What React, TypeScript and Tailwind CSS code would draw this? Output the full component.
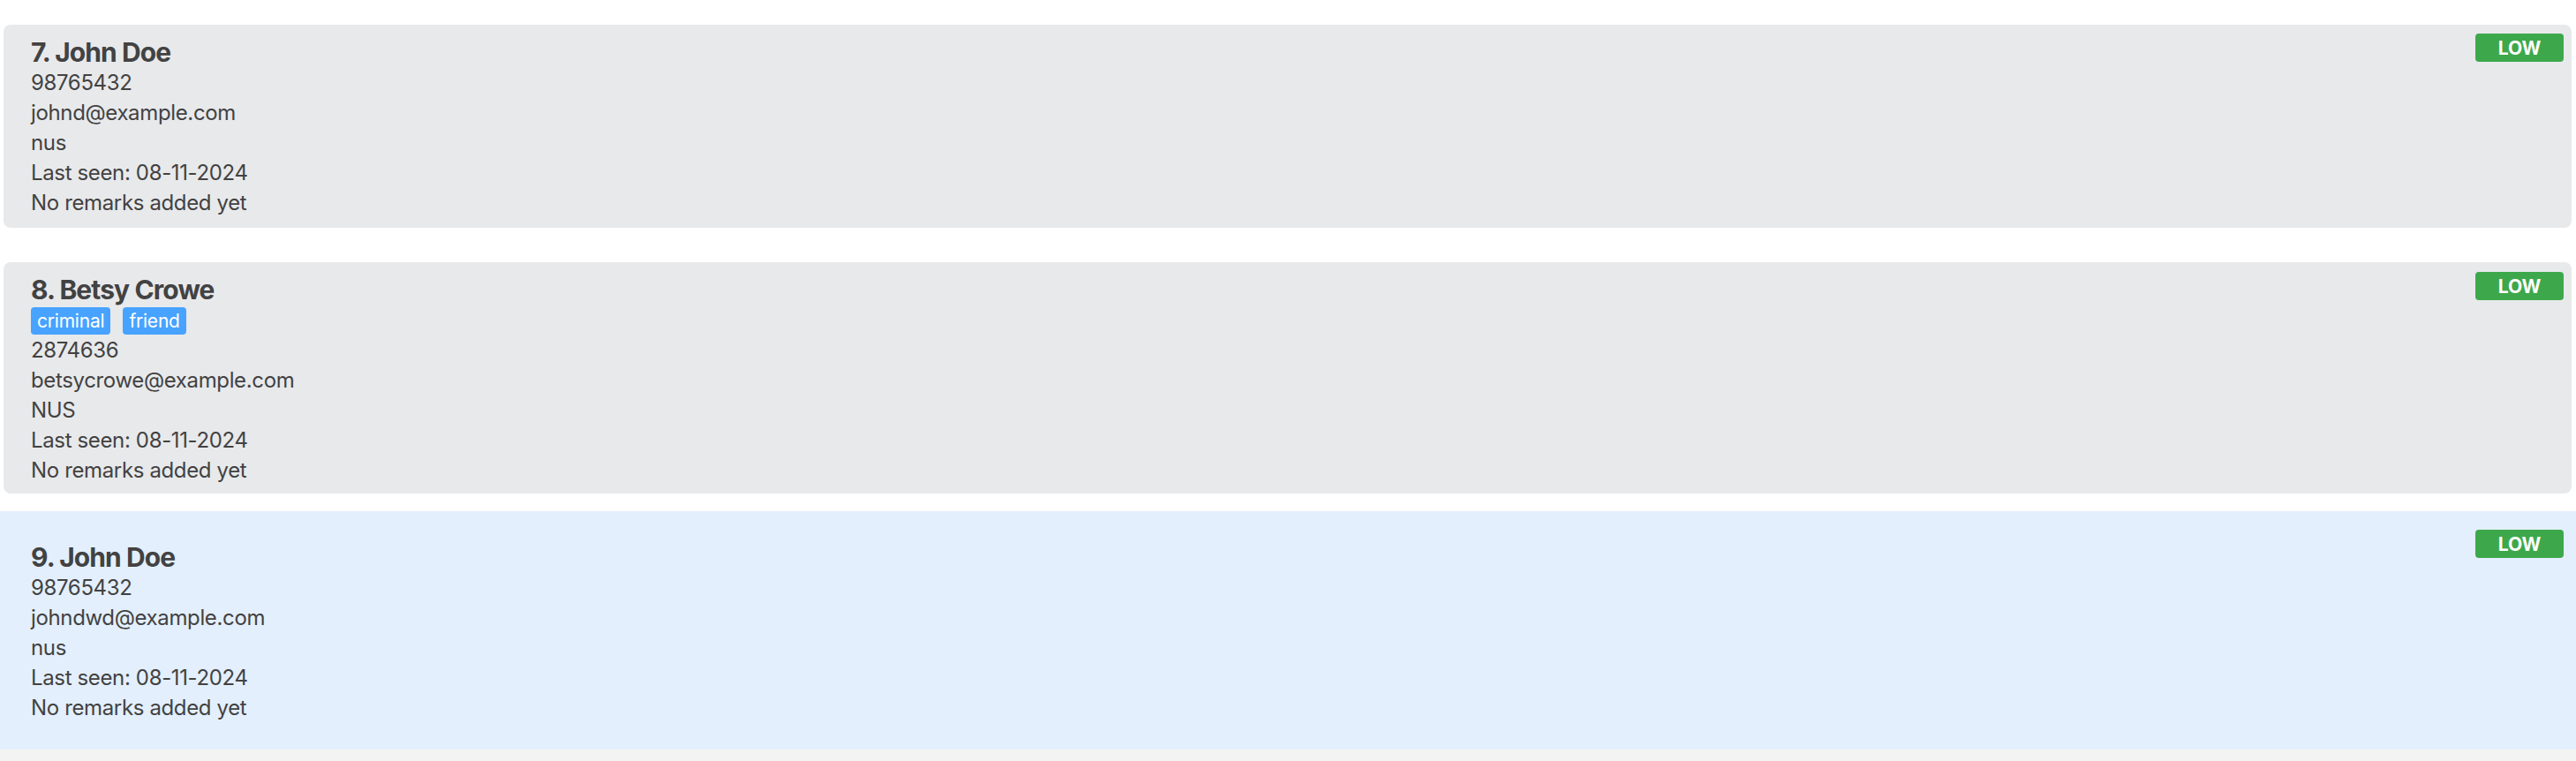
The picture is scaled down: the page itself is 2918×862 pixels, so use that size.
import React from 'react';

type Person = {
  index: number;
  name: string;
  tags: string[];
  phone: string;
  email: string;
  address: string;
  lastSeen: string;
  remark: string;
  priority: string;
};

const people: Person[] = [
  { index: 7, name: 'John Doe', tags: [], phone: '98765432', email: 'johnd@example.com', address: 'nus', lastSeen: '08-11-2024', remark: 'No remarks added yet', priority: 'LOW' },
  { index: 8, name: 'Betsy Crowe', tags: ['criminal', 'friend'], phone: '2874636', email: 'betsycrowe@example.com', address: 'NUS', lastSeen: '08-11-2024', remark: 'No remarks added yet', priority: 'LOW' },
  { index: 9, name: 'John Doe', tags: [], phone: '98765432', email: 'johndwd@example.com', address: 'nus', lastSeen: '08-11-2024', remark: 'No remarks added yet', priority: 'LOW' },
];

const PriorityBadge = ({ label, className }: { label: string; className: string }) => (
  <div className={`absolute flex h-[32px] w-[100px] items-center justify-center rounded-[4px] bg-[#3da84b] text-[21px] font-bold leading-none text-white ${className}`}>
    {label}
  </div>
);

const PersonBody = ({ p }: { p: Person }) => (
  <>
    <div className="text-[30px] font-bold leading-[35px] tracking-[-0.03em] text-[#424242]">
      {p.index}. {p.name}
    </div>
    {p.tags.length > 0 && (
      <div className="mt-[2px] mb-[1px] flex gap-[14px]">
        {p.tags.map((t) => (
          <span key={t} className="flex h-[31px] items-center rounded-[4px] bg-[#47a3ff] px-[7px] text-[21px] tracking-[-0.01em] text-white">
            {t}
          </span>
        ))}
      </div>
    )}
    <div className="text-[24px] leading-[34px] tracking-[-0.015em] text-[#424242]">
      <div>{p.phone}</div>
      <div>{p.email}</div>
      <div>{p.address}</div>
      <div>Last seen: {p.lastSeen}</div>
      <div>{p.remark}</div>
    </div>
  </>
);

export default function App() {
  const [first, second, selected] = people;
  return (
    <div className="flex h-[862px] w-full flex-col overflow-hidden bg-white font-['Inter','Noto_Sans',sans-serif]">
      <div className="pt-[28px] pl-[4px] pr-[5px]">
        <div className="relative rounded-[8px] bg-[#e8e9eb] pl-[31px] pr-[120px] pt-[14px] pb-[11px]">
          <PersonBody p={first} />
          <PriorityBadge label={first.priority} className="top-[10px] right-[9px]" />
        </div>
      </div>

      <div className="mt-[39px] pl-[4px] pr-[5px]">
        <div className="relative rounded-[8px] bg-[#e8e9eb] pl-[31px] pr-[120px] pt-[14px] pb-[9px]">
          <PersonBody p={second} />
          <PriorityBadge label={second.priority} className="top-[11px] right-[9px]" />
        </div>
      </div>

      {/* selected row fills the whole cell */}
      <div className="relative mt-[20px] shrink-0 bg-[#e3effd] pl-[35px] pr-[130px] pt-[35px] pb-[30px]">
        <PersonBody p={selected} />
        <PriorityBadge label={selected.priority} className="top-[21px] right-[14px]" />
      </div>

      <div className="flex-1 bg-[#f3f3f3]" />
    </div>
  );
}
